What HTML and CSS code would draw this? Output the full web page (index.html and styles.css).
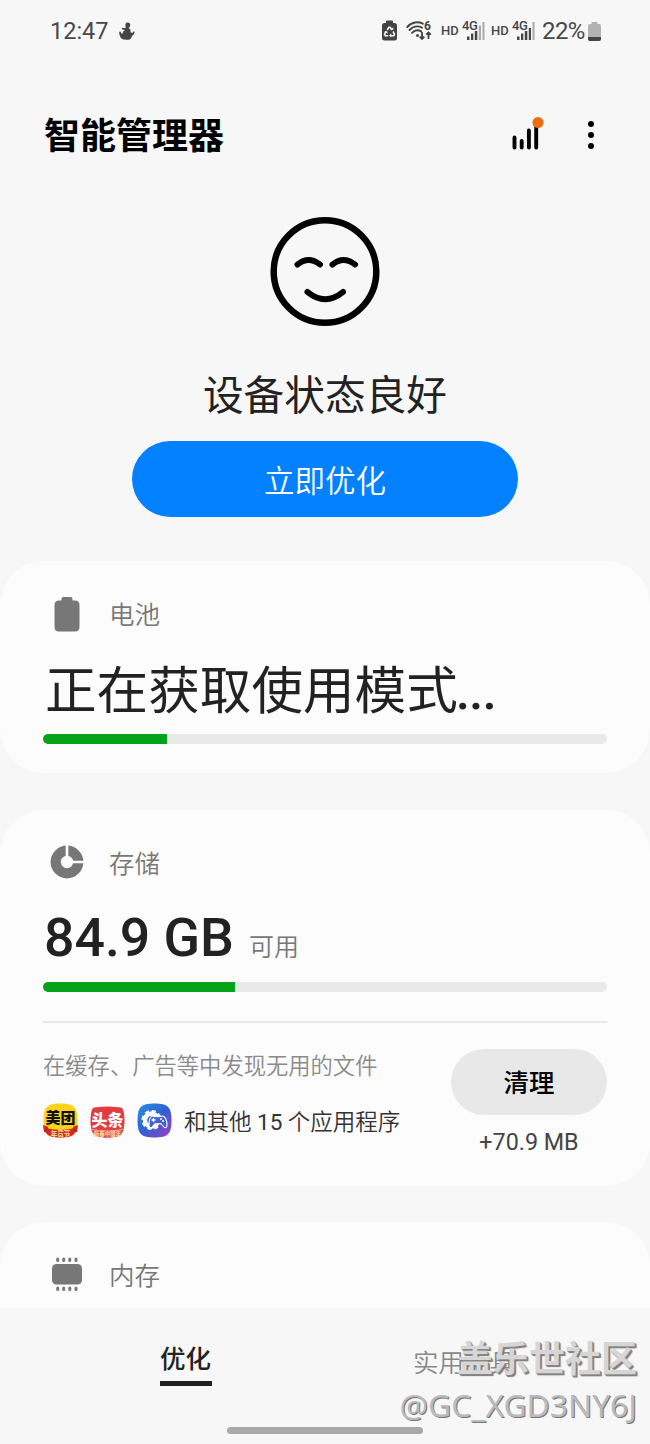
FILE: index.html
```html
<!DOCTYPE html>
<html lang="zh-CN">
<head>
<meta charset="utf-8">
<title>智能管理器</title>
<link rel="stylesheet" href="styles.css">
</head>
<body>
<div class="phone">
  <header class="status">
    <span class="time">12:47</span>
    <svg class="app-note" width="16" height="19" viewBox="0 0 16 19"><path d="M7.500.8c2-.8 4.200.4 3.700 2.700-.3 1.200-.6 1.700-1.700 2.500 1.700.8 2.300 2 2 4.300 1.200 1 2.700.7 3.100-1l1 .3c.1 2-1 3.700-2.700 4.300-.3 2.700-2 3.900-4.800 3.900-4 .2-6.300-1-6.900-3.300C.2 12.500-.1 10.800.6 9.500l1.200.2c0 1.500.7 2.200 1.800 1.800.3-1.700 1.100-2.900 2.600-3.700-1.700.2-3.100-.3-3.700-1.300l.9-.8c1.200.6 2.300.5 3.600-.2-1-1.600-.8-3.900.5-4.700z" fill="#444"/></svg>
    <span class="spacer"></span>
    <svg class="recycle" width="15" height="21" viewBox="0 0 15 21"><path d="M4 1.500Q4 .5 5 .5h5q1 0 1 1V3h1.500Q15 3 15 5.500v12.500q0 2.500-2.500 2.500h-10Q0 20.500 0 18V5.500Q0 3 2.500 3H4z" fill="#444"/><path d="M5.200 10l1.700-2.700h1.200l1.800 2.700M11 11.500l1.500 2.700-.8 1.500H8.800M6.200 15.700H3.300l-.8-1.500L4 11.500" fill="none" stroke="#f7f7f7" stroke-width="1.600"/><path d="M8.500 9.800h2.800V7.200zM9.300 13.500v4L7 15.600zM2.300 11.800l2.800-.8.700 2.800z" fill="#f7f7f7"/></svg>
    <svg class="wifi" width="26" height="20" viewBox="0 0 26 20"><g fill="none" stroke="#444" stroke-width="1.900" stroke-linecap="round"><path d="M1.200 6.100C5.500 1 12 .2 16.800 2.700M3.500 9C7 5.400 12 4.700 16 6.600M6 11.800c2.500-2.600 6.200-3 9.200-1.400"/></g><circle cx="11.500" cy="14.500" r="1.500" fill="#444"/><path d="M16 11v7m-2.300-2.300L16 18l2.300-2.300M22.500 18v-6.500M20.200 13.700l2.300-2.300 2.300 2.300" fill="none" stroke="#444" stroke-width="1.800"/><text class="six" x="18" y="9">6</text></svg>
    <span class="hd">HD</span>
    <svg class="signal" width="24" height="21" viewBox="0 0 24 21"><text class="gen" x="0" y="9.500">4G</text><g fill="#444"><path d="M5 16.500h2.500V20H5zM9 13.500h2.300V20H9zM12.800 11h2.500v9h-2.500z"/></g><path d="M16.800 5.500H19V20h-2.200zM20.500 2h2v18h-2z" fill="#aaa"/></svg>
    <span class="hd second">HD</span>
    <svg class="signal" width="24" height="21" viewBox="0 0 24 21"><text class="gen" x="0" y="9.500">4G</text><g fill="#444"><path d="M5 16.500h2.500V20H5zM9 13.500h2.300V20H9zM12.800 11h2.500v9h-2.500zM16.800 8H19v12h-2.200z"/></g><path d="M20.500 2h2v18h-2z" fill="#aaa"/></svg>
    <span class="percent">22%</span>
    <svg class="cell" width="13" height="19" viewBox="0 0 13 19"><path d="M3.500 0h6v2H11q2 0 2 2v13q0 2-2 2H2q-2 0-2-2V4q0-2 2-2h1.500z" fill="#b2b2b2"/><path d="M0 15h13v2q0 2-2 2H2q-2 0-2-2z" fill="#444"/></svg>
  </header>

  <div class="titlebar">
    <h1>智能管理器</h1>
    <svg class="chart" width="34" height="36" viewBox="0 0 34 36"><path d="M4.500 20.500V30.500M11.700 24V30.500M18.900 13.500V30.500M26.200 8V30.500" stroke="#000" stroke-width="3.900" stroke-linecap="round"/><circle cx="28" cy="5.500" r="5.500" fill="#f06a12"/></svg>
    <svg class="more" width="8" height="30" viewBox="0 0 8 30"><circle cx="4" cy="4" r="3"/><circle cx="4" cy="15" r="3"/><circle cx="4" cy="26" r="3"/></svg>
  </div>

  <section class="hero">
    <svg width="112" height="112" viewBox="0 0 112 112" fill="none" stroke="#000" stroke-linecap="round"><circle cx="56" cy="56.500" r="51.300" stroke-width="6.500"/><path d="M28.500 49.500q11-9 22.500 0M63.500 49.500q11-9 22.500 0M38.500 77q17.800 14.500 35.500 0" stroke-width="6"/></svg>
    <h2>设备状态良好</h2>
    <button class="optimize">立即优化</button>
  </section>

  <main class="cards">
    <section class="card battery">
      <div class="card-head">
        <svg width="34" height="36" viewBox="0 0 34 36"><path d="M11.500 3q0-2 2-2h7q2 0 2 2v1.500h2.500q4.500 0 4.500 4.500v22q0 4.500-4.500 4.500H9q-4.500 0-4.500-4.500V9q0-4.500 4.500-4.500h2.500z" fill="#777"/></svg>
        <span>电池</span>
      </div>
      <div class="mode">正在获取使用模式<span class="dots">...</span></div>
      <div class="track"><div class="fill" style="width:22%"></div></div>
    </section>

    <section class="card storage">
      <div class="card-head">
        <svg width="34" height="36" viewBox="0 0 34 36"><circle cx="17" cy="17" r="11.300" fill="none" stroke="#777" stroke-width="10.200"/><path d="M17 17V0M17 17h17" stroke="#fcfcfc" stroke-width="2.700"/></svg>
        <span>存储</span>
      </div>
      <div class="free"><strong>84.9 GB</strong><span>可用</span></div>
      <div class="track"><div class="fill" style="width:34%"></div></div>
      <hr>
      <div class="junk">
        <div class="junk-info">
          <p>在缓存、广告等中发现无用的文件</p>
          <div class="apps">
            <svg class="app-icon" width="35" height="35" viewBox="0 0 35 35"><defs><clipPath id="tile"><path d="M17.500.5C31 .5 34.500 4 34.500 17.500S31 34.500 17.500 34.500.5 31 .5 17.500 4 .5 17.500.5z"/></clipPath></defs><g clip-path="url(#tile)"><path d="M0 0h35v35H0z" fill="#fbd31c"/><path d="M0 24q17 6 35 0v11H0z" fill="#d42b20"/></g><path d="M0 22l5 2v5H1zM35 22l-5 2v5h4z" fill="#c9251b"/><text class="logo-mt" x="17.500" y="19.500">美团</text><text class="logo-sub" x="17.500" y="33">年货节</text></svg>
            <svg class="app-icon" width="35" height="35" viewBox="0 0 35 35"><g clip-path="url(#tile)"><path d="M0 5q17-3 35 0v30H0z" fill="#e33b40"/><path d="M0 26q17 4 35 0v9H0z" fill="#d94d3f"/><path d="M0 26q17 4 35 0" fill="none" stroke="#f5b39c"/></g><text class="logo-tt" x="17.500" y="23">头条</text><text class="logo-sub small" x="17.500" y="33">新春中国年</text></svg>
            <svg class="app-icon" width="35" height="35" viewBox="0 0 35 35"><defs><linearGradient id="game" x1="0" y1="0" x2="1" y2="1"><stop offset="0" stop-color="#2391e5"/><stop offset=".5" stop-color="#3260d2"/><stop offset="1" stop-color="#a23bc7"/></linearGradient></defs><path d="M17.500.5C31 .5 34.500 4 34.500 17.500S31 34.500 17.500 34.500.5 31 .5 17.500 4 .5 17.500.5z" fill="url(#game)"/><circle cx="14.500" cy="17" r="6.500" fill="none" stroke="#fff" stroke-width="4.500"/><circle cx="14.500" cy="17" r="8.700" fill="none" stroke="#fff" stroke-width="2.800" stroke-dasharray="4 2.830"/><path d="M15.500 13q5 1.500 9.500 0c3.500 0 5 5 5 9 0 3.500-2 3.500-4 1l-2-2.300h-6L16 23c-2 2.500-4 2.500-4-1 0-4 1-8.500 3.500-9z" fill="#4661cf" stroke="#fff" stroke-width="1.100"/><path d="M14.500 17h4M16.500 15v4" stroke="#fff" stroke-width="1.300"/><circle cx="24" cy="16" r="1" fill="#fff"/><circle cx="26" cy="18" r="1" fill="#fff"/></svg>
            <span>和其他 <b>15</b> 个应用程序</span>
          </div>
        </div>
        <div class="clean">
          <button>清理</button>
          <span>+70.9 MB</span>
        </div>
      </div>
    </section>

    <section class="card memory">
      <div class="card-head">
        <svg width="34" height="36" viewBox="0 0 34 36"><rect x="2" y="7" width="30" height="20.500" rx="4.500" fill="#777"/><path d="M7.700 2v1.600M13.700 2v1.600M19.800 2v1.600M26 2v1.600M7.700 31v1.600M13.700 31v1.600M19.800 31v1.600M26 31v1.600" stroke="#777" stroke-width="3" stroke-linecap="round"/></svg>
        <span>内存</span>
      </div>
    </section>
  </main>

  <nav class="tabs">
    <div class="tab active">优化</div>
    <div class="tab">实用工具</div>
    <div class="home-bar"></div>
    <div class="watermark">
      <div class="community">盖乐世社区</div>
      <div class="user">@GC_XGD3NY6J</div>
    </div>
  </nav>
</div>
</body>
</html>
```
FILE: styles.css
```css
* { box-sizing: border-box; }
body { margin: 0; background: #f7f7f7; }
h1, h2, p { margin: 0; }
button { border: 0; padding: 0; font-family: inherit; }
svg { display: block; flex: none; overflow: visible; }

.phone {
  display: flex;
  flex-direction: column;
  width: 650px;
  height: 1444px;
  overflow: hidden;
  background: #f7f7f7;
  color: #222;
  font-family: Roboto, "Noto Sans CJK SC", sans-serif;
  white-space: nowrap;
}

/* status bar */
.status {
  display: flex;
  align-items: center;
  height: 62px;
  padding: 0 49px 0 50px;
  color: #484848;
}
.time { width: 69px; font-size: 23.5px; }
.app-note { margin-top: 1px; }
.spacer { flex: 1; }
.recycle { margin: -2px 9px 0 0; }
.wifi { margin-right: 9px; }
.hd { width: 20px; font-size: 13px; font-weight: 500; line-height: 20px; margin-top: -1px; }
.second { margin-left: 5px; }
.signal { margin: -2px 0 0 1px; }
.six, .gen { fill: #444; font: 700 12px Roboto, sans-serif; }
.gen { font-size: 13px; font-weight: 500; letter-spacing: -.5px; }
.percent { width: 43px; margin: 0 3px 0 6px; font-size: 24px; letter-spacing: -.6px; }

/* title */
.titlebar {
  display: flex;
  align-items: center;
  height: 146px;
  padding: 0 55px 0 44px;
}
.titlebar h1 { flex: 1; padding-top: 4px; color: #000; font-size: 36px; font-weight: 700; line-height: 50px; }
.chart { margin-right: 43px; }

/* health summary */
.hero {
  display: flex;
  flex-direction: column;
  align-items: center;
  height: 353px;
  padding-top: 7px;
}
.hero h2 { margin-top: 39px; font-size: 40.7px; font-weight: 400; line-height: 60px; }
.optimize {
  width: 386px;
  height: 76px;
  margin-top: 15px;
  border-radius: 38px;
  background: #0381fe;
  color: #fff;
  font-size: 30.5px;
  font-weight: 350;
}

/* cards */
.cards { display: flex; flex-direction: column; height: 747px; overflow: hidden; }
.card { flex: none; padding: 34px 43px 0; border-radius: 44px; background: #fcfcfc; }
.battery { height: 212px; }
.storage { height: 376px; margin-top: 37px; }
.memory { height: 150px; margin-top: 36px; }
.card-head { display: flex; align-items: center; gap: 25px; height: 38px; padding-left: 7px; color: #777; font-size: 25.5px; font-weight: 350; }
.card-head span { padding-bottom: 3px; }
.mode { height: 82px; font-size: 51.6px; line-height: 117px; margin-bottom: 19px; padding-left: 2px; }
.dots { margin-left: -2px; letter-spacing: -1px; font-weight: 500; }
.track { height: 10px; border-radius: 5px; background: #e9e9e9; overflow: hidden; }
.fill { height: 100%; background: #05a31a; }
.free { display: flex; align-items: baseline; height: 76px; margin-bottom: 24px; padding-left: 1px; line-height: 111px; }
.free strong { font-size: 53.6px; font-weight: 500; }
.free span { margin-left: 15px; color: #777; font-size: 25px; font-weight: 350; }
hr { height: 2px; margin: 29px 0 26px; border: 0; background: #e8e8e8; }
.junk { display: flex; justify-content: space-between; }
.junk-info p { height: 34px; color: #8a8a8a; font-size: 22.3px; font-weight: 350; line-height: 34px; }
.apps { display: flex; align-items: center; gap: 12px; height: 36px; margin-top: 19px; color: #333; font-size: 22.5px; font-weight: 350; }
.apps b { font-weight: 400; }
.logo-mt, .logo-tt, .logo-sub { font-family: "Noto Sans CJK SC", sans-serif; font-weight: 900; text-anchor: middle; }
.logo-mt { font-size: 15px; fill: #111; }
.logo-tt { font-size: 16px; fill: #fff; }
.logo-sub { font-size: 6.5px; fill: #f7cf96; }
.logo-sub.small { font-size: 5.5px; }
.clean { display: flex; flex-direction: column; align-items: center; width: 156px; }
.clean button { width: 156px; height: 66px; padding-bottom: 3px; border-radius: 33px; background: #e8e8e8; color: #000; font-size: 25.5px; font-weight: 500; }
.clean span { margin-top: 13px; color: #444; font-size: 23.3px; line-height: 28px; }

/* bottom navigation */
.tabs { position: relative; display: flex; height: 136px; padding: 28px 0 0 160px; }
.tab { height: 50px; color: #888; font-size: 25.5px; font-weight: 350; line-height: 54px; }
.active { width: 52px; margin-right: 201px; border-bottom: 5px solid #222; color: #222; font-weight: 500; line-height: 46px; }
.home-bar { position: absolute; left: 227px; bottom: 10px; width: 196px; height: 7px; border-radius: 4px; background: #a9a9a9; }
.watermark { position: absolute; right: 13px; top: 26px; text-align: right; color: #d6d6d6; }
.community { font-size: 36px; font-weight: 700; line-height: 52px; text-shadow: 1px 1px 0 #888, 2px 2px 1px #777; }
.user { margin-top: -1px; color: #bbb; font: 31.8px/40px "Noto Sans", sans-serif; text-shadow: 1px 1px 0 #777; }
```
